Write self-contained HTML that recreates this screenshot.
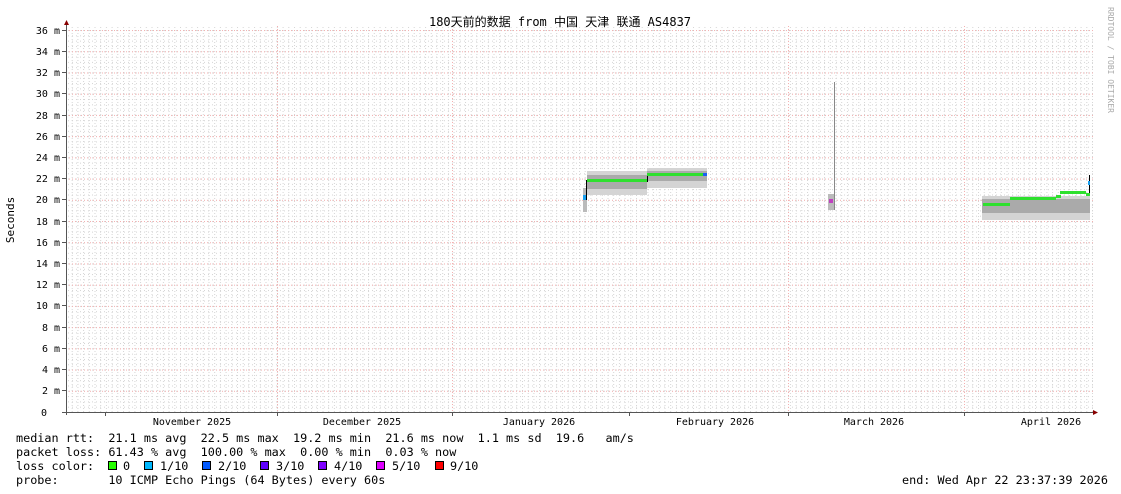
<!DOCTYPE html>
<html><head><meta charset="utf-8"><style>
html,body{margin:0;padding:0;background:#fff;}
svg{display:block;}
text{font-family:"DejaVu Sans Mono","Liberation Mono",monospace;fill:#000;white-space:pre;}
</style></head><body>
<svg width="1121" height="494" xmlns="http://www.w3.org/2000/svg">
<defs>
<pattern id="minh" x="0" y="412" width="4" height="5.305" patternUnits="userSpaceOnUse">
<rect x="0" y="0" width="1" height="1" fill="#d4d4d4"/></pattern>
<pattern id="minv" x="66" y="0" width="5.7" height="3" patternUnits="userSpaceOnUse">
<rect x="0" y="0" width="1" height="1" fill="#d4d4d4"/></pattern>
<pattern id="majh" x="0" y="412" width="3" height="21.22" patternUnits="userSpaceOnUse">
<rect x="0" y="0" width="1" height="1" fill="#f4b0b0"/></pattern>
</defs>
<rect width="1121" height="494" fill="#fff"/>
<rect x="66" y="26" width="1027" height="386" fill="url(#minh)"/>
<rect x="66" y="26" width="1027" height="386" fill="url(#minv)"/>
<rect x="66" y="27" width="1027" height="386" fill="url(#majh)"/>
<g stroke="#f4b0b0" stroke-dasharray="1,2" stroke-width="1">
<line x1="277.5" y1="26" x2="277.5" y2="412"/>
<line x1="452.5" y1="26" x2="452.5" y2="412"/>
<line x1="788.5" y1="26" x2="788.5" y2="412"/>
<line x1="964.5" y1="26" x2="964.5" y2="412"/>
</g>
<g>
<rect x="583" y="188" width="4" height="24" fill="#bbb"/>
<rect x="587" y="171" width="60" height="24" fill="#d4d4d4"/>
<rect x="587" y="175" width="60" height="14" fill="#aaa"/>
<rect x="647" y="168" width="60" height="20" fill="#d4d4d4"/>
<rect x="647" y="171" width="60" height="10" fill="#aaa"/>
<rect x="583" y="195" width="3" height="5" fill="#1aa0f0"/>
<line x1="586.5" y1="200" x2="586.5" y2="180" stroke="#000"/>
<rect x="587" y="179" width="60" height="3" fill="#2ee02e"/>
<line x1="647.5" y1="182" x2="647.5" y2="174" stroke="#000"/>
<rect x="647" y="173" width="58" height="3" fill="#2ee02e"/>
<rect x="703" y="173" width="4" height="3" fill="#1a60f0"/>
<rect x="828" y="194" width="6" height="16" fill="#bbb"/>
<line x1="834.5" y1="82" x2="834.5" y2="210" stroke="#888"/>
<rect x="829" y="199" width="4" height="4" fill="#c040c0"/>
<rect x="982" y="196" width="108" height="24" fill="#d4d4d4"/>
<rect x="982" y="199" width="108" height="14" fill="#aaa"/>
<rect x="983" y="203" width="27" height="3" fill="#2ee02e"/>
<rect x="1010" y="197" width="46" height="3" fill="#2ee02e"/>
<rect x="1056" y="195" width="5" height="3" fill="#2ee02e"/>
<rect x="1060" y="191" width="26" height="3" fill="#2ee02e"/>
<rect x="1086" y="193" width="4" height="3" fill="#2ee02e"/>
<line x1="1089.5" y1="193" x2="1089.5" y2="175" stroke="#000"/>
<rect x="1088" y="181" width="2" height="4" fill="#1aa0f0"/>
</g>
<line x1="66.5" y1="24" x2="66.5" y2="415" stroke="#555"/>
<line x1="62" y1="412.5" x2="1094" y2="412.5" stroke="#555"/>
<polygon points="64,25 69,25 66.5,20" fill="#800"/>
<polygon points="1093,410 1093,415 1098,412.5" fill="#800"/>
<g stroke="#555">
<line x1="62" y1="30.5" x2="66" y2="30.5"/><line x1="62" y1="51.5" x2="66" y2="51.5"/><line x1="62" y1="72.5" x2="66" y2="72.5"/><line x1="62" y1="93.5" x2="66" y2="93.5"/><line x1="62" y1="115.5" x2="66" y2="115.5"/><line x1="62" y1="136.5" x2="66" y2="136.5"/><line x1="62" y1="157.5" x2="66" y2="157.5"/><line x1="62" y1="178.5" x2="66" y2="178.5"/><line x1="62" y1="199.5" x2="66" y2="199.5"/><line x1="62" y1="221.5" x2="66" y2="221.5"/><line x1="62" y1="242.5" x2="66" y2="242.5"/><line x1="62" y1="263.5" x2="66" y2="263.5"/><line x1="62" y1="284.5" x2="66" y2="284.5"/><line x1="62" y1="305.5" x2="66" y2="305.5"/><line x1="62" y1="327.5" x2="66" y2="327.5"/><line x1="62" y1="348.5" x2="66" y2="348.5"/><line x1="62" y1="369.5" x2="66" y2="369.5"/><line x1="62" y1="390.5" x2="66" y2="390.5"/>
<line x1="105.5" y1="412" x2="105.5" y2="416"/><line x1="277.5" y1="412" x2="277.5" y2="416"/><line x1="452.5" y1="412" x2="452.5" y2="416"/><line x1="629.5" y1="412" x2="629.5" y2="416"/><line x1="788.5" y1="412" x2="788.5" y2="416"/><line x1="964.5" y1="412" x2="964.5" y2="416"/>
</g>
<g font-size="10" text-anchor="end">
<text x="60" y="34">36 m</text><text x="60" y="55">34 m</text><text x="60" y="76">32 m</text><text x="60" y="97">30 m</text><text x="60" y="119">28 m</text><text x="60" y="140">26 m</text><text x="60" y="161">24 m</text><text x="60" y="182">22 m</text><text x="60" y="203">20 m</text><text x="60" y="225">18 m</text><text x="60" y="246">16 m</text><text x="60" y="267">14 m</text><text x="60" y="288">12 m</text><text x="60" y="309">10 m</text><text x="60" y="331">8 m</text><text x="60" y="352">6 m</text><text x="60" y="373">4 m</text><text x="60" y="394">2 m</text><text x="47" y="416">0</text>
</g>
<g font-size="10" text-anchor="middle">
<text x="192" y="425">November 2025</text><text x="362" y="425">December 2025</text><text x="539" y="425">January 2026</text><text x="715" y="425">February 2026</text><text x="874" y="425">March 2026</text><text x="1051" y="425">April 2026</text>
</g>
<text x="14" y="220" font-size="11" text-anchor="middle" transform="rotate(-90 14 220)">Seconds</text>
<text x="1108" y="60" font-size="8" style="fill:#aaa" text-anchor="middle" transform="rotate(90 1108 60)">RRDTOOL / TOBI OETIKER</text>
<text x="560" y="26" font-size="12" text-anchor="middle" style='font-family:"DejaVu Sans Mono","Noto Sans CJK SC",monospace'>180天前的数据 from 中国 天津 联通 AS4837</text>
<g font-size="11.8">
<text x="16" y="442">median rtt:  21.1 ms avg  22.5 ms max  19.2 ms min  21.6 ms now  1.1 ms sd  19.6   am/s</text>
<text x="16" y="456">packet loss: 61.43 % avg  100.00 % max  0.00 % min  0.03 % now</text>
<text x="16" y="470">loss color:</text>
<text x="16" y="484">probe:       10 ICMP Echo Pings (64 Bytes) every 60s</text>
<text x="902" y="484">end: Wed Apr 22 23:37:39 2026</text>
</g>
<g stroke="#000" stroke-width="1">
<rect x="108.5" y="461.5" width="8" height="8" fill="#26ff00"/>
<rect x="144.5" y="461.5" width="8" height="8" fill="#00b8ff"/>
<rect x="202.5" y="461.5" width="8" height="8" fill="#0059ff"/>
<rect x="260.5" y="461.5" width="8" height="8" fill="#5e00ff"/>
<rect x="318.5" y="461.5" width="8" height="8" fill="#7e00ff"/>
<rect x="376.5" y="461.5" width="8" height="8" fill="#dd00ff"/>
<rect x="435.5" y="461.5" width="8" height="8" fill="#ff0000"/>
</g>
<g font-size="11.8">
<text x="123" y="470">0</text><text x="160" y="470">1/10</text><text x="218" y="470">2/10</text><text x="276" y="470">3/10</text><text x="334" y="470">4/10</text><text x="392" y="470">5/10</text><text x="450" y="470">9/10</text>
</g>
</svg>
</body></html>
